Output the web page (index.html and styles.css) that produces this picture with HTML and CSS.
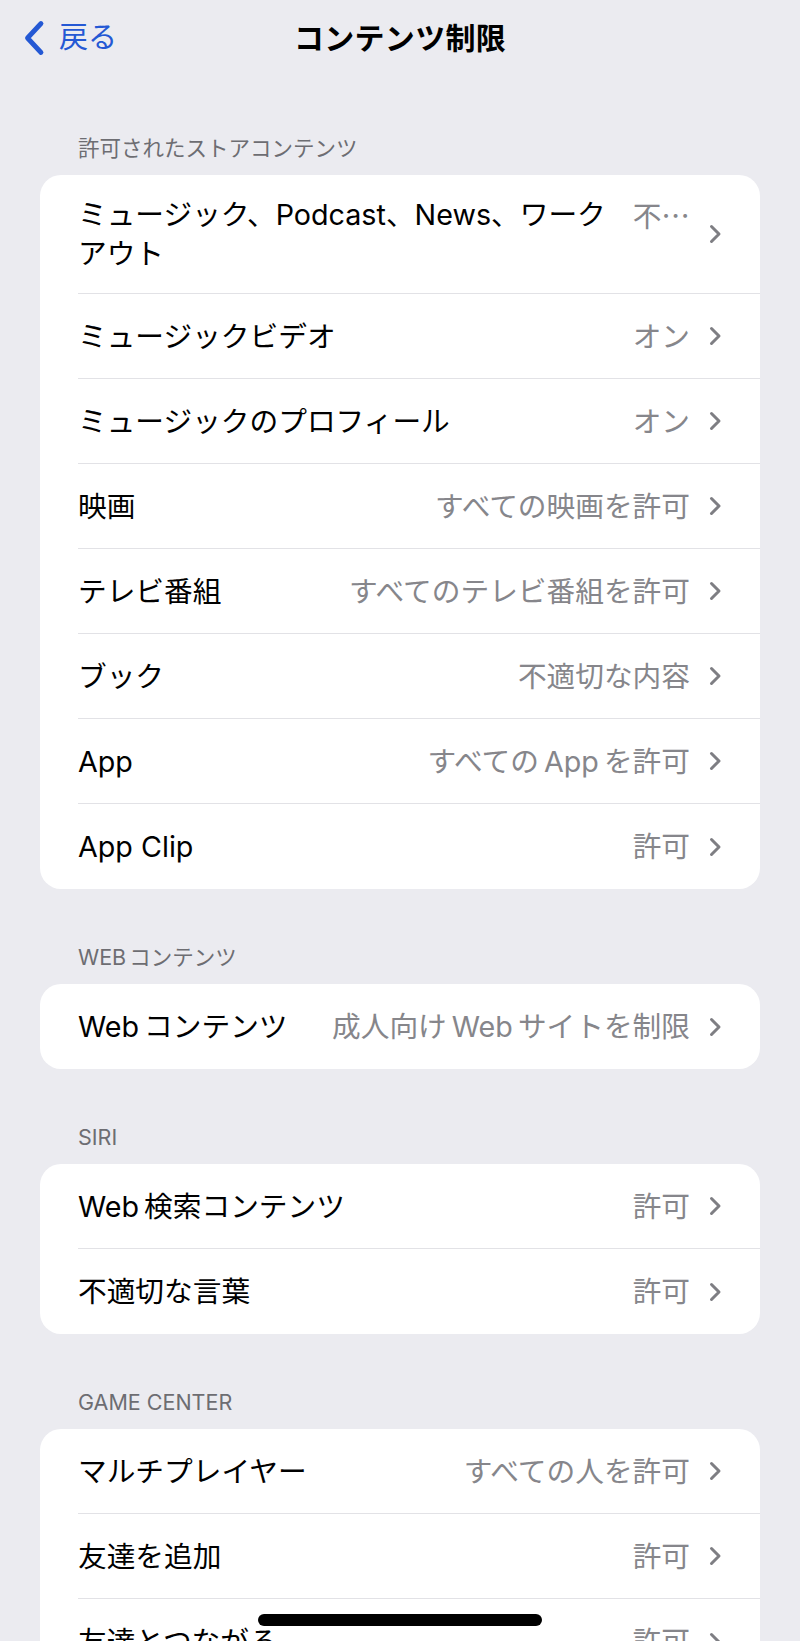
FILE: index.html
```html
<!DOCTYPE html>
<html lang="ja">
<head>
<meta charset="utf-8">
<title>コンテンツ制限</title>
<link rel="stylesheet" href="styles.css">
</head>
<body>
<div class="screen">
  <header class="nav">
    <div class="back">
      <svg class="back-chev" width="22" height="36" viewBox="0 0 22 36"><path d="M18 3.5 L4.5 18 L18 32.5" fill="none" stroke="#2458d4" stroke-width="4.8" stroke-linecap="round" stroke-linejoin="round"/></svg>
      <span class="back-label">戻る</span>
    </div>
    <h1 class="title">コンテンツ制限</h1>
    <div class="nav-spacer"></div>
  </header>

  <section class="section first">
    <div class="section-header">許可されたストアコンテンツ</div>
    <div class="card">
      <div class="row tall">
        <div class="label">ミュージック、Podcast、News、ワーク<br>アウト</div>
        <div class="value top">不<span class="cjk">…</span></div>
        <svg class="chev" width="13" height="20" viewBox="0 0 13 20"><path d="M2.5 2.5 L10 10 L2.5 17.5" fill="none" stroke="#7e7e83" stroke-width="3" stroke-linecap="round" stroke-linejoin="round"/></svg>
      </div>
      <div class="row">
        <div class="label">ミュージックビデオ</div>
        <div class="value">オン</div>
        <svg class="chev" width="13" height="20" viewBox="0 0 13 20"><path d="M2.5 2.5 L10 10 L2.5 17.5" fill="none" stroke="#7e7e83" stroke-width="3" stroke-linecap="round" stroke-linejoin="round"/></svg>
      </div>
      <div class="row">
        <div class="label">ミュージックのプロフィール</div>
        <div class="value">オン</div>
        <svg class="chev" width="13" height="20" viewBox="0 0 13 20"><path d="M2.5 2.5 L10 10 L2.5 17.5" fill="none" stroke="#7e7e83" stroke-width="3" stroke-linecap="round" stroke-linejoin="round"/></svg>
      </div>
      <div class="row">
        <div class="label">映画</div>
        <div class="value">すべての映画を許可</div>
        <svg class="chev" width="13" height="20" viewBox="0 0 13 20"><path d="M2.5 2.5 L10 10 L2.5 17.5" fill="none" stroke="#7e7e83" stroke-width="3" stroke-linecap="round" stroke-linejoin="round"/></svg>
      </div>
      <div class="row">
        <div class="label">テレビ番組</div>
        <div class="value">すべてのテレビ番組を許可</div>
        <svg class="chev" width="13" height="20" viewBox="0 0 13 20"><path d="M2.5 2.5 L10 10 L2.5 17.5" fill="none" stroke="#7e7e83" stroke-width="3" stroke-linecap="round" stroke-linejoin="round"/></svg>
      </div>
      <div class="row">
        <div class="label">ブック</div>
        <div class="value">不適切な内容</div>
        <svg class="chev" width="13" height="20" viewBox="0 0 13 20"><path d="M2.5 2.5 L10 10 L2.5 17.5" fill="none" stroke="#7e7e83" stroke-width="3" stroke-linecap="round" stroke-linejoin="round"/></svg>
      </div>
      <div class="row">
        <div class="label">App</div>
        <div class="value">すべての<span class="sp"></span>App<span class="sp"></span>を許可</div>
        <svg class="chev" width="13" height="20" viewBox="0 0 13 20"><path d="M2.5 2.5 L10 10 L2.5 17.5" fill="none" stroke="#7e7e83" stroke-width="3" stroke-linecap="round" stroke-linejoin="round"/></svg>
      </div>
      <div class="row">
        <div class="label">App Clip</div>
        <div class="value">許可</div>
        <svg class="chev" width="13" height="20" viewBox="0 0 13 20"><path d="M2.5 2.5 L10 10 L2.5 17.5" fill="none" stroke="#7e7e83" stroke-width="3" stroke-linecap="round" stroke-linejoin="round"/></svg>
      </div>
    </div>
  </section>

  <section class="section">
    <div class="section-header">WEB<span class="sp-s"></span>コンテンツ</div>
    <div class="card">
      <div class="row">
        <div class="label">Web<span class="sp"></span>コンテンツ</div>
        <div class="value">成人向け<span class="sp"></span>Web<span class="sp"></span>サイトを制限</div>
        <svg class="chev" width="13" height="20" viewBox="0 0 13 20"><path d="M2.5 2.5 L10 10 L2.5 17.5" fill="none" stroke="#7e7e83" stroke-width="3" stroke-linecap="round" stroke-linejoin="round"/></svg>
      </div>
    </div>
  </section>

  <section class="section">
    <div class="section-header">SIRI</div>
    <div class="card">
      <div class="row">
        <div class="label">Web<span class="sp"></span>検索コンテンツ</div>
        <div class="value">許可</div>
        <svg class="chev" width="13" height="20" viewBox="0 0 13 20"><path d="M2.5 2.5 L10 10 L2.5 17.5" fill="none" stroke="#7e7e83" stroke-width="3" stroke-linecap="round" stroke-linejoin="round"/></svg>
      </div>
      <div class="row">
        <div class="label">不適切な言葉</div>
        <div class="value">許可</div>
        <svg class="chev" width="13" height="20" viewBox="0 0 13 20"><path d="M2.5 2.5 L10 10 L2.5 17.5" fill="none" stroke="#7e7e83" stroke-width="3" stroke-linecap="round" stroke-linejoin="round"/></svg>
      </div>
    </div>
  </section>

  <section class="section">
    <div class="section-header">GAME CENTER</div>
    <div class="card">
      <div class="row">
        <div class="label">マルチプレイヤー</div>
        <div class="value">すべての人を許可</div>
        <svg class="chev" width="13" height="20" viewBox="0 0 13 20"><path d="M2.5 2.5 L10 10 L2.5 17.5" fill="none" stroke="#7e7e83" stroke-width="3" stroke-linecap="round" stroke-linejoin="round"/></svg>
      </div>
      <div class="row">
        <div class="label">友達を追加</div>
        <div class="value">許可</div>
        <svg class="chev" width="13" height="20" viewBox="0 0 13 20"><path d="M2.5 2.5 L10 10 L2.5 17.5" fill="none" stroke="#7e7e83" stroke-width="3" stroke-linecap="round" stroke-linejoin="round"/></svg>
      </div>
      <div class="row">
        <div class="label">友達とつながる</div>
        <div class="value">許可</div>
        <svg class="chev" width="13" height="20" viewBox="0 0 13 20"><path d="M2.5 2.5 L10 10 L2.5 17.5" fill="none" stroke="#7e7e83" stroke-width="3" stroke-linecap="round" stroke-linejoin="round"/></svg>
      </div>
    </div>
  </section>

  <div class="home-indicator"></div>
</div>
</body>
</html>
```

FILE: styles.css
```css
html, body {
  margin: 0;
  padding: 0;
  height: 1641px;
  overflow: hidden;
  background: #ebebf0;
}

.screen {
  position: relative;
  height: 1641px;
  overflow: hidden;
  font-family: Inter, "Noto Sans CJK JP", sans-serif;
  color: #000;
}

.nav {
  height: 76px;
  display: grid;
  grid-template-columns: 1fr auto 1fr;
  align-items: center;
}

.back {
  display: flex;
  align-items: center;
  padding-left: 23px;
  gap: 14px;
  color: #2458d4;
}

.back-chev {
  display: block;
}

.back-label {
  font-size: 29px;
  line-height: 40px;
}

.title {
  margin: 0;
  font-size: 30px;
  font-weight: 700;
  line-height: 40px;
  letter-spacing: 0.3px;
}

.section {
  margin-top: 54px;
}

.section.first {
  margin-top: 58px;
}

.section-header {
  padding-left: 78px;
  font-size: 21.5px;
  line-height: 28px;
  color: #6d6d72;
  text-transform: uppercase;
  margin-bottom: 13px;
}

.card {
  margin: 0 40px;
  background: #fff;
  border-radius: 21px;
  overflow: hidden;
}

.row {
  display: flex;
  align-items: center;
  height: 85px;
  box-sizing: border-box;
  margin-left: 38px;
  padding-right: 38px;
  border-bottom: 1.5px solid #e2e2e6;
  font-size: 28.7px;
  line-height: 39px;
}

.row:last-child {
  border-bottom: none;
}

.row.tall {
  height: 119px;
}

.label {
  flex: 1 1 auto;
  min-width: 0;
  white-space: nowrap;
}

.value {
  flex: 0 0 auto;
  margin-left: 16px;
  color: #86868b;
  white-space: nowrap;
}

.value.top {
  align-self: flex-start;
  margin-top: 20px;
}

.cjk {
  font-family: "Noto Sans CJK JP", sans-serif;
}

.sp {
  display: inline-block;
  width: 5px;
}

.sp-s {
  display: inline-block;
  width: 3px;
}

.chev {
  flex: 0 0 auto;
  display: block;
  margin-left: 19px;
}

.home-indicator {
  position: absolute;
  left: 258px;
  top: 1614px;
  width: 284px;
  height: 12px;
  border-radius: 6px;
  background: #000;
}
```
